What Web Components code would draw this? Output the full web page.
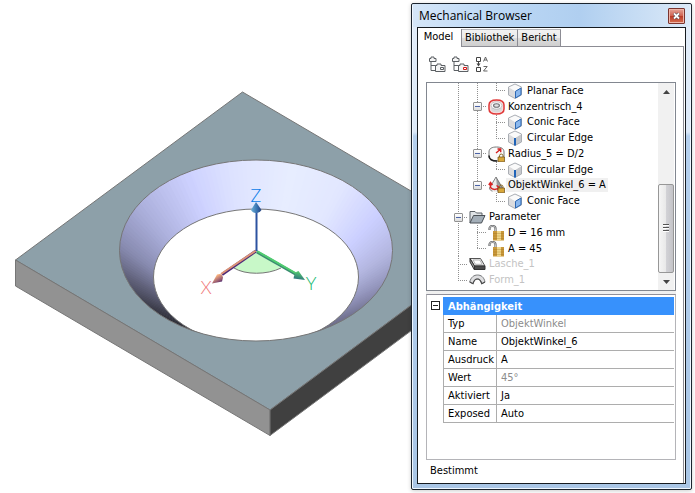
<!DOCTYPE html>
<html lang="de">
<head>
<meta charset="utf-8">
<title>Mechanical Browser</title>
<style>
html, body { height: 100%; }
body { margin: 0; background: #fff; font-family: "DejaVu Sans Condensed", "DejaVu Sans", "Noto Sans", sans-serif; font-stretch: condensed; font-size: 11px; line-height: 14px; color: #000; }
</style>
</head>
<body>
<cad-app></cad-app>

<script>
const define = (name, markup, setup) => {
  const tpl = document.createElement('template');
  tpl.innerHTML = markup;
  customElements.define(name, class extends HTMLElement {
    connectedCallback() {
      if (this.shadowRoot) return;
      this.attachShadow({ mode: 'open' }).append(tpl.content.cloneNode(true));
      if (setup) setup(this, this.shadowRoot);
    }
  });
};

/* ---------- icons ---------- */
const cube = '<path d="M8 1 14.500 4v8L8 15.500 1.500 12V4z" fill="#f4f4f4"/><path d="M8 8v7.500L1.500 12V4z" fill="#dcdcde"/><path d="M8 8l6.500-4v8L8 15.500z" fill="#c6c8cc"/><path d="M8 1 14.500 4 8 8 1.500 4z" fill="#fafafa"/><path d="M8 1 14.500 4v8L8 15.500 1.500 12V4z" fill="none" stroke="#aaaeb4"/>';
const lock = '<path d="M11.500 11V9.800a1.500 1.500 0 0 1 3.500 0V11" fill="none" stroke="#8a6a28"/><path d="M10 11h6.500v4.800H10z" fill="#d9a83a" stroke="#6b4a16" stroke-width=".7"/>';
const folders = c => '<path d="M2 6v8.500h5M2 9.500h5" fill="none" stroke="#5c6064"/><path d="M.500 5.500V2.500h1.500V1h3v1.500h2v3z" fill="#f6f6f6" stroke="#5c6064"/><path d="M6.500 15.500v-6h1.500V8h4v1.500h4v6z" fill="#f6f6f6" stroke="#5c6064"/><path d="M11.500 11.500h3v2h-3z" fill="#fff" stroke="' + c + '"/>';
const icons = {
  face: cube + '<path d="M8.500 8.300 14 5v6.700l-5.500 3.300z" fill="#8bb8ee" stroke="#2c68b4"/>',
  edge: cube + '<path d="M8 8v7.500" stroke="#1f63b8" stroke-width="2"/>',
  concentric: '<path d="M1 6c0-3.500 3.200-5 7.500-5S16 2.500 16 6v4c0 3.500-3.200 5-7.500 5S1 13.500 1 10z" fill="#f6dcdc" stroke="#e03838" stroke-width="1.500"/><path d="M3 6.500V10c0 2.200 2.500 3.200 5.500 3.200S14 12.200 14 10V6.500z" fill="#d8d8da"/><ellipse cx="8.500" cy="6.500" rx="5.500" ry="3.700" fill="#fafafa" stroke="#b0b0b4" stroke-width=".7"/><ellipse cx="8.500" cy="6.500" rx="2.900" ry="1.800" fill="#e2e2e4" stroke="#6c6c70" stroke-width="1.100"/>',
  radius: '<path d="M1 6C1 2.500 4 1 8.500 1S16 2.500 16 6v4c0 3.500-3 5-7.500 5S1 13.500 1 10z" fill="#fafafa" stroke="#777"/><path d="M1 9.500c0 4 3.500 5.500 8 5.500" fill="none" stroke="#222" stroke-width="1.600"/><path d="M8 7 12.500 3.200M9.500 3h3.200v3.200" fill="none" stroke="#d42020" stroke-width="1.400"/>' + lock,
  angle: '<path d="M8 0 14.500 11c0 2.300-2.500 3.800-6.500 3.800S1.500 13.300 1.500 11z" fill="#ececec"/><path d="M8 0 14.500 11c0 2-2 3.500-5 3.800z" fill="#9a9c9e"/><path d="M8 0l6.500 11M8 0 1.500 11c0 1.500 1 2.500 3 3.200" fill="none" stroke="#666" stroke-width=".8"/><path d="M2.500 6v4.500c2 2.500 6 2.500 8.500 0M.800 8l1.700-2.500L4.500 8M8.500 8.500l2.800 2-1.500 3" fill="none" stroke="#d82424" stroke-width="1.500"/>' + lock,
  folder: '<path d="M1 14V2.500h5L7.500 4H13v3" fill="#dfe3e6" stroke="#5a6066"/><path d="M1 14 4.500 6.500H16L12.500 14z" fill="#a3aeb8" stroke="#4a5056"/>',
  unlock: '<path d="M1.500 5V3.500a3 2.500 0 0 1 6 0V7" fill="none" stroke="#66686a" stroke-width="2.200"/><path d="M1.500 4.500v-1a3 2.500 0 0 1 6 0V6" fill="none" stroke="#d8d8d8" stroke-width=".8"/><path d="M5 6h11v9.500H5z" fill="#c9983a"/><path d="M9 6h4v9.500H9z" fill="#f0d68a"/><path d="M5 8.500h11M5 11h11M5 13.500h11" stroke="#946a18" stroke-opacity=".5" stroke-width=".6"/>',
  flap: '<path d="M1 2.500h10.500L16 10H5.500z" fill="#f0f0f0" stroke="#555"/><path d="M4 4h6.700l2.500 4.300H6.500z" fill="#fff" stroke="#999" stroke-width=".700"/><path d="M1 2.500 5.500 10v4L1 6z" fill="#999" stroke="#333"/><path d="M5.500 10H16v3.500H5.500z" fill="#4c4c4c" stroke="#333"/>',
  form: '<path d="M.700 10C2 5 5 3 8.500 3s6.500 2 7.500 7l-3.200 1.700C11.500 8 10.500 7 8.500 7S5 8 4 11.700z" fill="#dedee0" stroke="#77797c"/><path d="M.700 10 4 11.700C5 8 6.500 7 8.500 7s3 1 4.300 4.700L16 10" fill="none" stroke="#4c4c4c" stroke-width="1.200"/>',
  tree: folders('#5c6064'),
  treered: folders('#d11a1a'),
  sort: '<path d="M1.500 1.500h4v4h-4zM1.500 11.500h4v4h-4z" fill="#fff" stroke="#444"/><path d="M3.500 6v3" stroke="#444"/><path d="M1.500 7.500h4l-2 3z" fill="#444"/><path d="M8.500 5.500l2-4.500 2 4.500M9.300 4h2.400M8.500 10.500h3.700l-3.700 4.500h4" fill="none" stroke="#555" stroke-width=".900"/>',
};
define('ui-icon', '<style>:host{display:block;flex:none;width:17px;height:16px}svg{display:block}</style><svg width="17" height="16" viewBox="0 0 17 16" aria-hidden="true"></svg>', (el, root) => {
  root.querySelector('svg').innerHTML = icons[el.getAttribute('name')];
});

/* ---------- 3D view ---------- */
define('model-view', `
<style>
:host { display: block; min-width: 0; overflow: hidden; }
svg { display: block; width: 100%; height: 100%; }
text { font: 300 18px Lato, "Open Sans", sans-serif; }
</style>
<svg viewBox="0 0 411 493" preserveAspectRatio="xMinYMin slice" role="img" aria-label="3D-Modell">
  <defs>
    <clipPath id="rim"><ellipse cx="256" cy="250.500" rx="136.500" ry="90.500"/></clipPath>
    <linearGradient id="cz"><stop offset="0" stop-color="#6db1d8"/><stop offset=".6" stop-color="#376fae"/><stop offset="1" stop-color="#243f7c"/></linearGradient>
    <linearGradient id="cx" x1="0" y1="0" x2=".7" y2="1"><stop offset=".3" stop-color="#fdb47e"/><stop offset=".8" stop-color="#8a5070"/><stop offset="1" stop-color="#3c2070"/></linearGradient>
    <linearGradient id="cy" x1=".6" y1="0" x2=".3" y2="1"><stop offset=".2" stop-color="#50c070"/><stop offset="1" stop-color="#2a6e80"/></linearGradient>
  </defs>
  <g stroke="#767676" stroke-width="1" stroke-linejoin="round">
    <path d="M242.500 92 497 241.500 270 410 15.500 260z" fill="#8da0a9"/>
    <path d="M15.500 260 270 410v25.500L15.500 286z" fill="#929292"/>
    <path d="M270 410 497 241.500V267L270 435.500z" fill="#404040"/>
  </g>
  <g clip-path="url(#rim)">
    <g id="cone"></g>
    <ellipse cx="256" cy="277" rx="102.500" ry="68" fill="#fff" stroke="#767676"/>
  </g>
  <ellipse cx="256" cy="250.500" rx="136.500" ry="90.500" fill="none" stroke="#767676"/>
  <path d="M256 251 234 268c11 7 33 7 47 0z" fill="#c8f8c8"/>
  <path d="M234 268c11 7 33 7 47 0" fill="none" stroke="#767676"/>
  <path d="M256 251 222 274.500" stroke="#4c2878" stroke-width="3"/>
  <path d="M256 250.500 221 274" stroke="#dc9478" stroke-width="2"/>
  <path d="M257 252 298 275.500" stroke="#3a8c70" stroke-width="3"/>
  <path d="M257 251 298 274.500" stroke="#50cc70" stroke-width="2"/>
  <path d="M256.500 251V208" stroke="#2c52a0" stroke-width="2"/>
  <path d="M256 202 261.500 210q-2 3-5.500 3t-5-3z" fill="url(#cz)"/>
  <path d="M212 283.500 217 274.500q5-2 6 3l-1 4z" fill="url(#cx)"/>
  <path d="M305 280 298.500 271q-4 1-5 7.500z" fill="url(#cy)"/>
  <text x="256" y="202" text-anchor="middle" fill="#0c7ce8">Z</text>
  <text x="206" y="294" text-anchor="middle" fill="#f07878">X</text>
  <text x="311" y="290" text-anchor="middle" fill="#14b86c">Y</text>
</svg>`, (el, root) => {
  /* shade along the cone's generators: angle in degrees, colour */
  const stops = [[-120, 205, 209, 255], [-100, 222, 227, 255], [-75, 231, 237, 255], [-50, 226, 231, 255], [-25, 203, 207, 255], [0, 178, 181, 222], [20, 147, 149, 188], [40, 118, 118, 150], [60, 100, 98, 126], [95, 50, 50, 60], [130, 42, 42, 50], [145, 62, 62, 76], [165, 96, 97, 122], [185, 136, 139, 176], [210, 170, 174, 218], [240, 205, 209, 255]];
  const colour = a => {
    const i = Math.max(1, stops.findIndex(s => s[0] >= a));
    const p = stops[i - 1], q = stops[i], t = (a - p[0]) / (q[0] - p[0]);
    return 'rgb(' + [1, 2, 3].map(k => Math.round(p[k] + (q[k] - p[k]) * t)) + ')';
  };
  const at = (a, cy, rx, ry) => (256 + rx * Math.cos(a * Math.PI / 180)).toFixed(2) + ' ' + (cy + ry * Math.sin(a * Math.PI / 180)).toFixed(2);
  let out = '';
  for (let a = -120; a < 240; a += 2)
    out += `<path fill="${colour(a + 1)}" d="M${at(a, 250.5, 138, 92)}L${at(a + 3, 250.5, 138, 92)}L${at(a + 3, 277, 101, 67)}L${at(a, 277, 101, 67)}z"/>`;
  root.getElementById('cone').innerHTML = out;
});

/* ---------- window frame ---------- */
define('tool-window', `
<style>
:host { display: flex; flex-direction: column; box-sizing: border-box; min-width: 0; border: 1px solid #1b242e; border-radius: 2px; padding: 0 5px 5px; background: linear-gradient(#e3edf9 0, #dce9f8 128px, #b5d0ee 132px, #a9c6e6 100%); box-shadow: inset 0 0 0 1px #eef6ff, 0 1px 4px #0003; }
header { display: flex; align-items: center; justify-content: space-between; height: 23px; background: linear-gradient(90deg, #d5e6f8, #bcd8f5 30%, #b0cff0 60%, #dbe9f8); margin: 0 -4px; padding: 0 5px 0 6px; }
h1 { margin: 0; font: 12px/16px "Open Sans", "Noto Sans", sans-serif; white-space: nowrap; }
button { box-sizing: border-box; width: 17px; height: 16px; padding: 0; border: 1px solid #7a3530; border-radius: 1px; background: linear-gradient(#e6a498, #cf6352 48%, #b93b28 52%, #d56e50); box-shadow: inset 0 0 0 1px #efb5a8; }
svg { display: block; margin: auto; }
main { flex: 1; display: flex; flex-direction: column; min-height: 0; border: 1px solid #161b20; background: #fff; padding-right: 1px; }
</style>
<header><h1><slot name="title"></slot></h1><button aria-label="Schließen"><svg width="9" height="8" viewBox="0 0 9 8"><path d="M2 1.500l5 5m0-5-5 5" stroke="#40404c" stroke-width="3"/><path d="M2 1.500l5 5m0-5-5 5" stroke="#fff" stroke-width="1.800"/></svg></button></header>
<main><slot></slot></main>`);

define('tab-bar', `
<style>
:host { display: block; background: linear-gradient(#8c8c94, #8c8c94) 43px 100% / 100% 1px no-repeat; }
div { display: flex; box-sizing: border-box; height: 19px; padding-top: 1px; }
button { font: inherit; box-sizing: border-box; padding: 0 3px 1px; border: 1px solid #8c8c94; border-left-width: 0; border-top-color: #b8b8bc; background: linear-gradient(#f2f2f2, #ebebeb 48%, #dcdcdc 52%, #cfcfcf); color: #000; flex: none; white-space: nowrap; }
button[aria-selected=true] { border: 0; border-right: 1px solid #8c8c94; background: #fff; width: 44px; padding: 0 2px 3px 0; }
</style>
<div role="tablist"><button role="tab" aria-selected="true">Model</button><button role="tab" aria-selected="false">Bibliothek</button><button role="tab" aria-selected="false">Bericht</button></div>`);

define('tool-bar', `
<style>
:host { display: flex; gap: 6px; padding: 9px 11px 10px; }
button { padding: 0; border: 0; background: none; }
</style>
<button aria-label="Erweitern"><ui-icon name="tree"></ui-icon></button><button aria-label="Reduzieren"><ui-icon name="treered"></ui-icon></button><button aria-label="Sortieren"><ui-icon name="sort"></ui-icon></button>`);

/* ---------- tree ---------- */
define('tree-node', `
<style>
:host { display: flex; align-items: center; flex: 1 1 0; min-height: 0; white-space: nowrap; }
i { --dots: #909090; flex: none; align-self: stretch; width: 19px; display: flex; align-items: center; justify-content: center; background-repeat: no-repeat; }
.v, .t, .l { background-image: repeating-linear-gradient(var(--dots) 0 1px, #0000 1px 2px), repeating-linear-gradient(90deg, var(--dots) 0 1px, #0000 1px 2px); background-position: 9px 0, 9px 50%; background-size: 1px 100%, 10px 1px; }
.v { background-size: 1px 100%, 0 0; }
.l { background-size: 1px 50%, 10px 1px; }
button { box-sizing: border-box; width: 9px; height: 9px; padding: 0; border: 1px solid #919191; border-radius: 1px; background: linear-gradient(#4b63a7, #4b63a7) center / 5px 1px no-repeat, linear-gradient(#fff, #ddd); }
ui-icon { margin: 0 1px; }
span { padding: 0 2px; }
:host([selected]) span { background: #f0f0f0; }
:host([muted]) span { color: #c3c3c3; }
</style><span><slot></slot></span>`, (el, root) => {
  const label = root.querySelector('span');
  for (const c of el.getAttribute('guides')) {
    const cell = document.createElement('i');
    cell.className = { v: 'v', t: 't', l: 'l', T: 't', L: 'l' }[c] || '';
    if (c === 'T' || c === 'L') cell.innerHTML = '<button aria-label="Reduzieren"></button>';
    label.before(cell);
  }
  const icon = document.createElement('ui-icon');
  icon.setAttribute('name', el.getAttribute('icon'));
  label.before(icon);
});

define('scroll-bar', `
<style>
:host { display: flex; flex-direction: column; width: 16px; background: #f1f1f1; flex: none; }
button { flex: none; height: 17px; padding: 0; border: 0; background: none; }
svg { display: block; margin: auto; }
.gap { flex: 84 1 0; }
.thumb { flex: 88 1 0; box-sizing: border-box; border: 1px solid #979797; border-radius: 2px; background: linear-gradient(90deg, #f5f5f5, #e9e9e9 48%, #d2d2d6 52%, #c4c4c8); display: flex; align-items: center; justify-content: center; }
</style>
<button aria-label="Nach oben"><svg width="7" height="4"><path d="M0 4 3.500 0 7 4z" fill="#444"/></svg></button>
<div class="gap"></div>
<div class="thumb"><svg width="8" height="8"><path d="M1 .500h6M1 3.500h6M1 6.500h6" stroke="#555"/><path d="M1 1.500h6M1 4.500h6M1 7.500h6" stroke="#fff"/></svg></div>
<button aria-label="Nach unten"><svg width="7" height="4"><path d="M0 0 3.500 4 7 0z" fill="#444"/></svg></button>`);

define('tree-view', `
<style>
:host { display: flex; flex: 1 1 0; min-height: 160px; margin: 0 7px 0 8px; border: 1px solid #828790; padding: 0 1px 0 0; }
.rows { flex: 1; min-width: 0; display: flex; flex-direction: column; padding: 0 0 2px 22px; overflow: hidden; }
</style>
<div class="rows"><slot></slot></div><scroll-bar></scroll-bar>`);

/* ---------- properties ---------- */
define('property-grid', `
<style>
:host { display: flex; flex: none; box-sizing: border-box; height: 166px; margin: 0 7px 0 8px; border: 1px solid #b4b4b8; border-top-color: #90909a; padding: 2px 1px 0 0; align-items: flex-start; }
.box { box-sizing: border-box; flex: none; width: 9px; height: 9px; margin: 4px 3px 0 4px; padding: 0; border: 1px solid #222; background: linear-gradient(#222, #222) center / 5px 1px no-repeat #fff; }
table { flex: 1; border-collapse: separate; border-spacing: 0; }
th, td { box-sizing: border-box; height: 18px; padding: 1px 0 0 4px; text-align: left; font-weight: 400; line-height: 14px; border-bottom: 1px solid #adadad; white-space: nowrap; }
thead th { background: #3791fc; color: #fff; font-weight: 700; border-bottom: 0; padding-left: 5px; }
tbody th { width: 54px; border-left: 1px solid #adadad; border-right: 1px solid #adadad; }
.ro { color: #8c8c8c; }
</style>
<button class="box" aria-label="Reduzieren"></button>
<table>
<thead><tr><th colspan="2">Abhängigkeit</th></tr></thead>
<tbody>
<tr><th>Typ</th><td class="ro">ObjektWinkel</td></tr>
<tr><th>Name</th><td>ObjektWinkel_6</td></tr>
<tr><th>Ausdruck</th><td>A</td></tr>
<tr><th>Wert</th><td class="ro">45°</td></tr>
<tr><th>Aktiviert</th><td>Ja</td></tr>
<tr><th>Exposed</th><td>Auto</td></tr>
</tbody></table>`);

define('cad-app', `
<style>
:host { display: flex; height: 100%; min-height: 420px; overflow: hidden; }
model-view { flex: 411 1 411px; }
tool-window { flex: 281 1 281px; margin: 3px 3px 3px 0; }
.pane { flex: 1; min-height: 0; display: flex; flex-direction: column; border-right: 1px solid #8c8c94; }
.split { flex: none; height: 3px; background: #f0f0f0; margin: 0 7px 0 8px; }
footer { padding: 4px 12px 5px; line-height: 14px; }
</style>
<model-view></model-view>
<tool-window><span slot="title">Mechanical Browser</span>
<tab-bar></tab-bar>
<div class="pane">
<tool-bar></tool-bar>
<tree-view>
<tree-node guides="vvl" icon="face">Planar Face</tree-node>
<tree-node guides="vT" icon="concentric">Konzentrisch_4</tree-node>
<tree-node guides="vvt" icon="face">Conic Face</tree-node>
<tree-node guides="vvl" icon="edge">Circular Edge</tree-node>
<tree-node guides="vT" icon="radius">Radius_5 = D/2</tree-node>
<tree-node guides="vvl" icon="edge">Circular Edge</tree-node>
<tree-node guides="vL" icon="angle" selected>ObjektWinkel_6 = A</tree-node>
<tree-node guides="v.l" icon="face">Conic Face</tree-node>
<tree-node guides="T" icon="folder">Parameter</tree-node>
<tree-node guides="vt" icon="unlock">D = 16 mm</tree-node>
<tree-node guides="vl" icon="unlock">A = 45</tree-node>
<tree-node guides="t" icon="flap" muted>Lasche_1</tree-node>
<tree-node guides="l" icon="form" muted>Form_1</tree-node>
</tree-view>
<div class="split"></div>
<property-grid></property-grid>
<footer>Bestimmt</footer>
</div>
</tool-window>`);
</script>
</body>
</html>
